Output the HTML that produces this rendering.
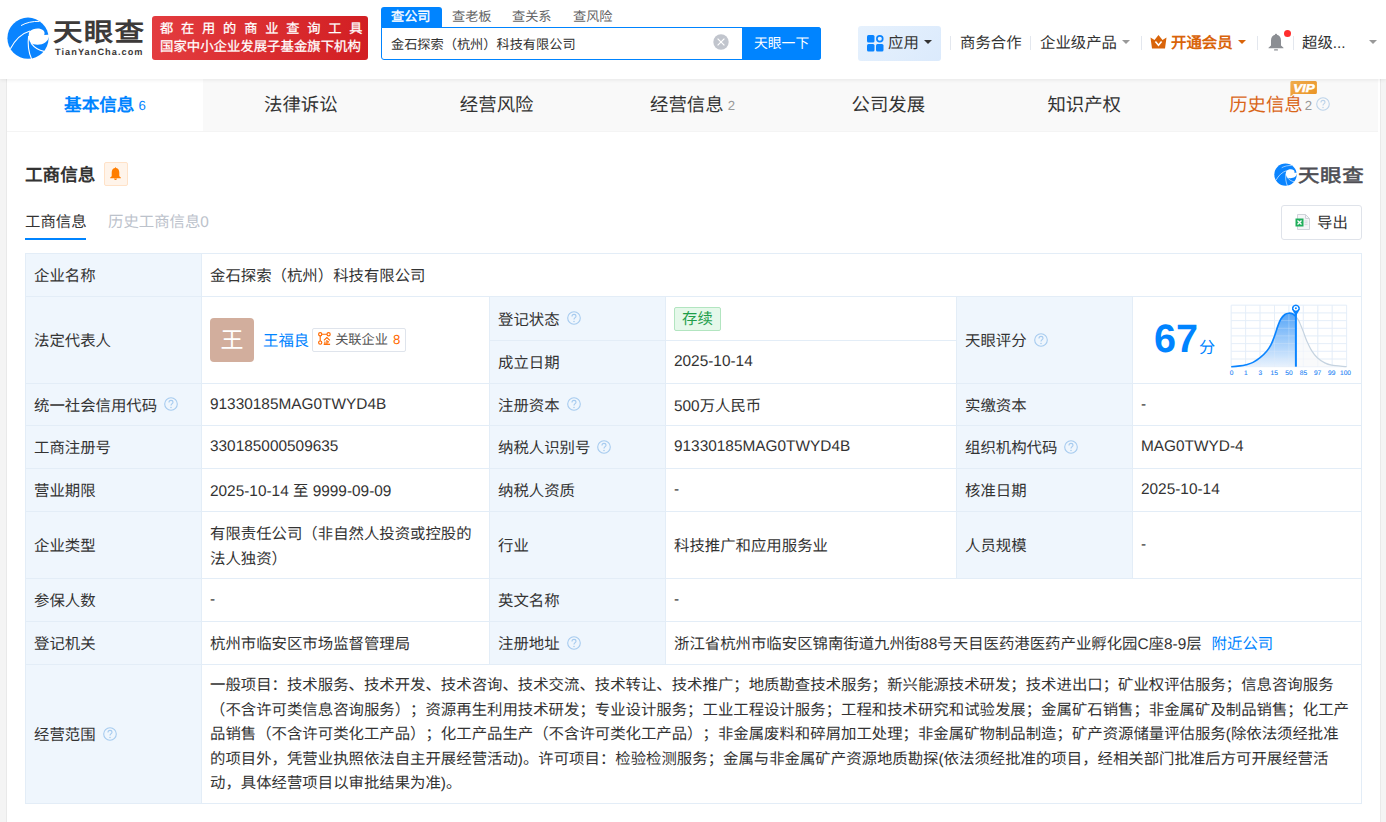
<!DOCTYPE html>
<html lang="zh-CN">
<head>
<meta charset="utf-8">
<style>
*{margin:0;padding:0;box-sizing:border-box}
html,body{width:1386px;height:822px;overflow:hidden;text-rendering:geometricPrecision;text-spacing-trim:space-all;background:#f4f4f4;font-family:"Liberation Sans",sans-serif;color:#333}
.abs{position:absolute}
#hdr{position:absolute;left:0;top:0;width:1386px;height:79px;background:#fff;box-shadow:0 1px 4px rgba(0,0,0,.08);z-index:2}
.nw{white-space:nowrap}
#card{position:absolute;left:6px;top:79px;width:1375px;height:760px;background:#fff;border-left:1px solid #e9e9e9;border-right:1px solid #e9e9e9}
.tabs{position:absolute;left:0;top:0;width:1372px;height:52px;background:#f9f9f9;border-bottom:1px solid #eee}
.tab{position:absolute;top:79px;height:52px;line-height:52px;text-align:center;font-size:18.4px;color:#333;white-space:nowrap}
.tab.on{background:#fff;color:#0084ff;font-weight:bold;font-size:17.6px}
.tab .n{font-size:13.2px;color:#999;font-weight:normal;margin-left:4px;position:relative;top:-1px}
.tab.on .n{color:#0084ff}
table{position:absolute;left:18px;top:174px;border-collapse:collapse;table-layout:fixed;font-size:15.4px;color:#333}
td{border:1px solid #e3edf6;padding:0 8px;vertical-align:middle}
td.l{background:#eff6fd}
.q{display:inline-block;width:14px;height:14px;border:1.2px solid #b7cfe6;border-radius:50%;color:#b7cfe6;font-size:10px;line-height:12px;text-align:center;vertical-align:middle;margin-left:6px;position:relative;top:-1px}
.c{position:absolute;display:flex;align-items:center;padding-left:8px;font-size:15.4px;color:#333;white-space:nowrap}
.av{width:44px;height:44px;border-radius:4px;background:#d2ae9d;color:#fff;font-size:23px;line-height:45px;text-align:center}
.rel{display:inline-block;margin-left:3px;height:24px;line-height:22px;border:1px solid #dfe4ec;border-radius:2px;padding:0 5px 0 5px;font-size:13.2px;position:relative;top:-0.5px}
.tag{display:inline-block;height:24px;line-height:24px;padding:0 7px;background:#e5f8ea;border:1px solid #b2e5c0;border-radius:2px;color:#1f9e4a;font-size:15.4px}
.scope{line-height:24.6px;white-space:nowrap;text-spacing-trim:space-all;position:relative;top:1.5px}
.qi{margin-left:7px;flex:none;position:relative;top:-0.5px}
.tab .qi{vertical-align:middle;position:relative;top:-2px;margin-left:5px}
</style>
</head>
<body>
<div id="hdr">
  <!-- logo -->
  <svg class="abs" style="left:5px;top:15px" width="46" height="46" viewBox="0 0 46 46"><g id="lg">
    <circle cx="23" cy="23.2" r="20.6" fill="#0a84ff"/>
    <path d="M24.4 16.4C28 13.4 34.5 12.4 38.2 15.2C39.9 16.6 39.8 18.6 39.2 19.9L46 19.6L46 21.6L43.9 21.8C43.3 26.5 38.5 29.8 32.5 29.8C29.5 29.8 27.3 29 26.1 28.3C23.6 25.8 23 20.5 24.4 16.4Z" fill="#fff"/>
    <path d="M5.4 33.8C10 25 17 18.3 25 16" fill="none" stroke="#fff" stroke-width="1.1"/>
    <path d="M23.6 21C22.6 29 23.6 37.5 26.6 44" fill="none" stroke="#fff" stroke-width="1.1"/>
    <path d="M26 28.2C29 32.2 33.5 35.4 39 36.4" fill="none" stroke="#fff" stroke-width="1.1"/>
    <path d="M16 10.6C21 7.6 28 6.1 34.5 6.4" fill="none" stroke="#fff" stroke-width="1"/>
  </g></svg>
  <div class="abs nw" style="left:53px;top:19px;font-size:29.5px;line-height:34px;font-weight:bold;color:#3d3a39;letter-spacing:1.2px;transform:scaleY(0.86);transform-origin:0 0">天眼查</div>
  <div class="abs nw" style="left:55px;top:46px;font-size:9.2px;line-height:12px;font-weight:bold;color:#3d3a39;letter-spacing:1.05px">TianYanCha.com</div>
  <!-- banner -->
  <div class="abs" style="left:152px;top:16px;width:216px;height:44px;border-radius:3px;background:linear-gradient(90deg,#e33c3f,#d21f23)"></div>
  <div class="abs nw" style="left:160px;top:20.3px;font-size:13.2px;color:#fff;letter-spacing:7.85px;line-height:18px;-webkit-text-stroke:0.25px #fff">都在用的商业查询工具</div>
  <div class="abs nw" style="left:160px;top:38.3px;font-size:13.4px;color:#fff;line-height:18px;-webkit-text-stroke:0.25px #fff">国家中小企业发展子基金旗下机构</div>
  <!-- search -->
  <div class="abs" style="left:381px;top:7px;width:61px;height:21px;background:#0084ff;border-radius:3px 3px 0 0"></div>
  <div class="abs nw" style="left:391px;top:7px;font-size:13.2px;line-height:20px;color:#fff;-webkit-text-stroke:0.35px #fff">查公司</div>
  <div class="abs nw" style="left:452px;top:7px;font-size:13.2px;line-height:20px;color:#666">查老板</div>
  <div class="abs nw" style="left:512px;top:7px;font-size:13.2px;line-height:20px;color:#666">查关系</div>
  <div class="abs nw" style="left:573px;top:7px;font-size:13.2px;line-height:20px;color:#666">查风险</div>
  <div class="abs" style="left:381px;top:27px;width:440px;height:33px;border:1px solid #0084ff;border-radius:0 3px 3px 3px;background:#fff"></div>
  <div class="abs nw" style="left:391px;top:35px;font-size:13.2px;line-height:20px;color:#333">金石探索（杭州）科技有限公司</div>
  <svg class="abs" style="left:713px;top:34.3px" width="16" height="16" viewBox="0 0 16 16"><circle cx="8" cy="8" r="7.7" fill="#c1c5cd"/><path d="M4.6 4.6L11.4 11.4M11.4 4.6L4.6 11.4" stroke="#fff" stroke-width="1.2"/></svg>
  <div class="abs" style="left:742px;top:27px;width:79px;height:33px;background:#0084ff;border-radius:0 3px 3px 0"></div>
  <div class="abs nw" style="left:754px;top:34px;font-size:13.8px;line-height:20px;color:#fff">天眼一下</div>
  <!-- right nav -->
  <div class="abs" style="left:858px;top:26px;width:83px;height:35px;background:linear-gradient(135deg,#e6f1fd,#dbeafc);border-radius:3px"></div>
  <svg class="abs" style="left:867px;top:35px" width="17" height="17" viewBox="0 0 17 17">
    <rect x="0" y="0" width="7.5" height="7.5" rx="1.5" fill="#0a84ff"/>
    <circle cx="12.8" cy="3.75" r="2.9" fill="none" stroke="#0a84ff" stroke-width="1.7"/>
    <rect x="0" y="9" width="7.5" height="7.5" rx="1.5" fill="#0a84ff"/>
    <rect x="9" y="9" width="7.5" height="7.5" rx="1.5" fill="#0a84ff"/>
  </svg>
  <div class="abs nw" style="left:888px;top:32.7px;font-size:15.4px;line-height:22px;color:#333">应用</div>
  <div class="abs" style="left:924px;top:40px;border-left:4px solid transparent;border-right:4px solid transparent;border-top:4px solid #333"></div>
  <div class="abs" style="left:950px;top:36px;width:1px;height:14px;background:#e3e7ee"></div>
  <div class="abs nw" style="left:960px;top:32.7px;font-size:15.4px;line-height:22px;color:#333">商务合作</div>
  <div class="abs" style="left:1030px;top:36px;width:1px;height:14px;background:#e3e7ee"></div>
  <div class="abs nw" style="left:1040px;top:32.7px;font-size:15.4px;line-height:22px;color:#333">企业级产品</div>
  <div class="abs" style="left:1122px;top:40px;border-left:4px solid transparent;border-right:4px solid transparent;border-top:4px solid #999"></div>
  <div class="abs" style="left:1141px;top:36px;width:1px;height:14px;background:#e3e7ee"></div>
  <svg class="abs" style="left:1150px;top:35px" width="17" height="14" viewBox="0 0 17 14"><path d="M0.5 2.5L4.5 5L8.5 0L12.5 5L16.5 2.5L15 13.5H2Z" fill="#d9640a"/><path d="M5.4 6.5L8.5 10.2L11.6 6.5" fill="none" stroke="#fff" stroke-width="1.6"/></svg>
  <div class="abs nw" style="left:1171px;top:32.7px;font-size:15.4px;line-height:22px;color:#d9640a;font-weight:bold">开通会员</div>
  <div class="abs" style="left:1238px;top:40px;border-left:4px solid transparent;border-right:4px solid transparent;border-top:4px solid #d9640a"></div>
  <div class="abs" style="left:1257px;top:36px;width:1px;height:14px;background:#e3e7ee"></div>
  <svg class="abs" style="left:1268px;top:33px" width="16" height="18" viewBox="0 0 16 18"><path d="M8 0.8C8.6 0.8 9 1.2 9 1.8C11.6 2.4 13 4.6 13 7.5V12.5L15.5 14.8V15.3H0.5V14.8L3 12.5V7.5C3 4.6 4.4 2.4 7 1.8C7 1.2 7.4 0.8 8 0.8Z" fill="#8b8e93"/><rect x="6" y="16.3" width="4" height="1.3" rx="0.6" fill="#8b8e93"/></svg>
  <div class="abs" style="left:1284px;top:30px;width:7.4px;height:7.4px;border-radius:50%;background:#ff2d2d"></div>
  <div class="abs" style="left:1293px;top:36px;width:1px;height:14px;background:#e3e7ee"></div>
  <div class="abs nw" style="left:1302px;top:32.7px;font-size:15.4px;line-height:22px;color:#333">超级...</div>
  <div class="abs" style="left:1369px;top:40px;border-left:4px solid transparent;border-right:4px solid transparent;border-top:4px solid #999"></div>
</div>

<div id="card"></div>
<div id="tabs" class="abs" style="left:7px;top:79px;width:1371px;height:53px;background:#f9f9f9;border-bottom:1px solid #f4f4f4"></div>
<div class="abs" style="left:7px;top:79px;width:196px;height:52px;background:#fff;border-right:1px solid #efefef"></div>
<div class="tab on" style="left:7.00px;width:195.86px">基本信息<span class="n">6</span></div>
<div class="tab" style="left:202.86px;width:195.86px">法律诉讼</div>
<div class="tab" style="left:398.72px;width:195.86px">经营风险</div>
<div class="tab" style="left:594.58px;width:195.86px">经营信息<span class="n">2</span></div>
<div class="tab" style="left:790.44px;width:195.86px">公司发展</div>
<div class="tab" style="left:986.30px;width:195.86px">知识产权</div>
<div class="tab" style="left:1182.16px;width:195.86px;color:#d9661a">历史信息<span class="n" style="margin-left:2px">2</span><svg class="qi" style="margin-left:5px;left:-1px" width="14" height="14" viewBox="0.5 0.5 14 14"><circle cx="7.5" cy="7.5" r="6.3" fill="none" stroke="#bcd3ea" stroke-width="1.1"/><path d="M5.5 5.9C5.5 4.6 6.4 3.9 7.5 3.9C8.6 3.9 9.5 4.7 9.5 5.8C9.5 7.1 7.5 7.2 7.5 8.9" fill="none" stroke="#bcd3ea" stroke-width="1.1"/><circle cx="7.5" cy="10.9" r="0.75" fill="#bcd3ea"/></svg></div>

<svg class="abs" style="left:1289px;top:80px;z-index:1" width="30" height="18" viewBox="0 0 30 18"><defs><linearGradient id="vg" x1="0" y1="0" x2="1" y2="1"><stop offset="0" stop-color="#f2ad4e"/><stop offset="1" stop-color="#e99222"/></linearGradient></defs><path d="M2.6 1.1H26.4Q27.9 1.1 27.9 2.6V12.4Q27.9 13.9 26.4 13.9H4.4L1.4 16.6V2.6Q1.4 1.1 2.6 1.1Z" fill="url(#vg)"/><text x="4.2" y="12.1" font-family="Liberation Sans" font-weight="bold" font-style="italic" font-size="11.4" fill="#fff" stroke="#fff" stroke-width="0.5" textLength="21.5" lengthAdjust="spacingAndGlyphs">VIP</text></svg>
<!-- section title -->
<div class="abs nw" style="left:25px;top:162px;font-size:17.6px;line-height:26px;font-weight:bold;color:#333">工商信息</div>
<div class="abs" style="left:104px;top:162px;width:24px;height:24px;background:#fff4ea;border:1px solid #ffe2c8;border-radius:2px"></div>
<svg class="abs" style="left:110px;top:167px" width="11" height="13" viewBox="0 0 11 13"><path d="M5.5 0.3C5.9 0.3 6.1 0.6 6.1 1C8.3 1.4 9.3 3.2 9.3 5.6V9.3L10.8 10.6V11.2H0.2V10.6L1.7 9.3V5.6C1.7 3.2 2.7 1.4 4.9 1C4.9 0.6 5.1 0.3 5.5 0.3Z" fill="#ff7d00"/><path d="M4 11.4H7C7 12.3 6.3 12.9 5.5 12.9C4.7 12.9 4 12.3 4 11.4Z" fill="#ff7d00"/></svg>
<!-- mini logo -->
<svg class="abs" style="left:1273px;top:162px" width="25" height="25" viewBox="0 0 46 46"><use href="#lg"/></svg>
<div class="abs nw" style="left:1298px;top:165.5px;font-size:21.5px;line-height:24px;font-weight:normal;-webkit-text-stroke:0.7px #4e4e54;color:#4e4e54;letter-spacing:0.6px;transform:scaleY(0.86);transform-origin:0 0">天眼查</div>
<!-- subtabs -->
<div class="abs nw" style="left:25px;top:211.5px;font-size:15.4px;line-height:22px;color:#333">工商信息</div>
<div class="abs" style="left:25px;top:238px;width:61px;height:2px;background:#0084ff"></div>
<div class="abs nw" style="left:108px;top:211.5px;font-size:15.4px;line-height:22px;color:#bcc2cb">历史工商信息0</div>
<!-- export -->
<div class="abs" style="left:1281px;top:205px;width:81px;height:35px;border:1px solid #dfe3ea;border-radius:3px;background:#fff"></div>
<svg class="abs" style="left:1295px;top:214px" width="16" height="16" viewBox="0 0 16 16"><path d="M2.5 0.5H10.5L14.5 4.5V15.5H2.5Z" fill="#f4f5f7" stroke="#cfd3da"/><path d="M10.5 0.5V4.5H14.5" fill="none" stroke="#cfd3da"/><rect x="0.5" y="4.5" width="8" height="8" fill="#1fae5b"/><path d="M2.5 6.5L6.5 10.5M6.5 6.5L2.5 10.5" stroke="#fff" stroke-width="1.3"/><path d="M9.5 7H12.5M9.5 8.8H12.5M9.5 10.6H12.5" stroke="#cfd3da" stroke-width="0.9"/></svg>
<div class="abs nw" style="left:1317px;top:213px;font-size:15.4px;line-height:22px;color:#333">导出</div>
<div class="abs" style="left:25px;top:253px;width:1337px;height:551px;background:#fff"></div>
<div class="abs" style="left:25px;top:253px;width:176px;height:550px;background:#eff6fd"></div>
<div class="abs" style="left:489px;top:296px;width:176px;height:368px;background:#eff6fd"></div>
<div class="abs" style="left:956px;top:296px;width:176px;height:282px;background:#eff6fd"></div>
<div class="abs" style="left:25px;top:253px;width:1px;height:551px;background:#e3edf7"></div>
<div class="abs" style="left:201px;top:253px;width:1px;height:551px;background:#e3edf7"></div>
<div class="abs" style="left:489px;top:296px;width:1px;height:368px;background:#e3edf7"></div>
<div class="abs" style="left:665px;top:296px;width:1px;height:368px;background:#e3edf7"></div>
<div class="abs" style="left:956px;top:296px;width:1px;height:282px;background:#e3edf7"></div>
<div class="abs" style="left:1132px;top:296px;width:1px;height:282px;background:#e3edf7"></div>
<div class="abs" style="left:1361px;top:253px;width:1px;height:551px;background:#e3edf7"></div>
<div class="abs" style="left:25px;top:253px;width:1337px;height:1px;background:#e3edf7"></div>
<div class="abs" style="left:25px;top:296px;width:1337px;height:1px;background:#e3edf7"></div>
<div class="abs" style="left:489px;top:340px;width:467px;height:1px;background:#e3edf7"></div>
<div class="abs" style="left:25px;top:383px;width:1337px;height:1px;background:#e3edf7"></div>
<div class="abs" style="left:25px;top:425px;width:1337px;height:1px;background:#e3edf7"></div>
<div class="abs" style="left:25px;top:468px;width:1337px;height:1px;background:#e3edf7"></div>
<div class="abs" style="left:25px;top:511px;width:1337px;height:1px;background:#e3edf7"></div>
<div class="abs" style="left:25px;top:578px;width:1337px;height:1px;background:#e3edf7"></div>
<div class="abs" style="left:25px;top:621px;width:1337px;height:1px;background:#e3edf7"></div>
<div class="abs" style="left:25px;top:664px;width:1337px;height:1px;background:#e3edf7"></div>
<div class="abs" style="left:25px;top:803px;width:1337px;height:1px;background:#e3edf7"></div>
<div class="c" style="left:26px;top:254px;width:175px;height:42px;">企业名称</div>
<div class="c" style="left:202px;top:254px;width:1159px;height:42px;">金石探索（杭州）科技有限公司</div>
<div class="c" style="left:26px;top:297px;width:175px;height:86px;">法定代表人</div>
<div class="c" style="left:202px;top:297px;width:287px;height:86px;"><div class="av">王</div><span style="color:#0084ff;margin-left:9px">王福良</span><span class="rel"><svg width="13" height="13" viewBox="0 0 13 13" style="vertical-align:-1.5px"><g fill="none" stroke="#ff6a00" stroke-width="1.15"><circle cx="2.2" cy="2.2" r="1.6"/><circle cx="10.6" cy="2.2" r="1.6"/><circle cx="2.2" cy="10.6" r="1.6"/><path d="M3.8 2.2H9M2.2 3.8V9"/><path d="M5.9 8.4L8.9 5.5L11.9 8.4M8.9 8V12.2M8.9 9.8H11M6.9 9.6V12.2"/><path d="M5.7 12.3H12.1" stroke-width="1.3"/></g></svg><span style="margin-left:4px;color:#555">关联企业</span><span style="margin-left:5px;color:#ff6a00">8</span></span></div>
<div class="c" style="left:490px;top:297px;width:175px;height:43px;">登记状态<svg class="qi" width="14" height="14" viewBox="0.5 0.5 14 14"><circle cx="7.5" cy="7.5" r="6.3" fill="none" stroke="#a6cbef" stroke-width="1.1"/><path d="M5.5 5.9C5.5 4.6 6.4 3.9 7.5 3.9C8.6 3.9 9.5 4.7 9.5 5.8C9.5 7.1 7.5 7.2 7.5 8.9" fill="none" stroke="#a6cbef" stroke-width="1.1"/><circle cx="7.5" cy="10.9" r="0.75" fill="#a6cbef"/></svg></div>
<div class="c" style="left:666px;top:297px;width:290px;height:43px;"><span class="tag">存续</span></div>
<div class="c" style="left:490px;top:341px;width:175px;height:42px;">成立日期</div>
<div class="c" style="left:666px;top:341px;width:290px;height:42px;">2025-10-14</div>
<div class="c" style="left:957px;top:297px;width:175px;height:86px;">天眼评分<svg class="qi" width="14" height="14" viewBox="0.5 0.5 14 14"><circle cx="7.5" cy="7.5" r="6.3" fill="none" stroke="#a6cbef" stroke-width="1.1"/><path d="M5.5 5.9C5.5 4.6 6.4 3.9 7.5 3.9C8.6 3.9 9.5 4.7 9.5 5.8C9.5 7.1 7.5 7.2 7.5 8.9" fill="none" stroke="#a6cbef" stroke-width="1.1"/><circle cx="7.5" cy="10.9" r="0.75" fill="#a6cbef"/></svg></div>
<div class="c" style="left:1133px;top:297px;width:228px;height:86px;"></div>
<svg class="abs" style="left:1228px;top:300px" width="124" height="80" viewBox="1228 300 124 80">
<defs><linearGradient id="gf" x1="0" y1="0" x2="0" y2="1"><stop offset="0" stop-color="#55a5f8"/><stop offset="1" stop-color="#e8f2fd"/></linearGradient></defs>
<path d="M1231.2 305.2V366.7" stroke="#e9f1fa" stroke-width="1"/><path d="M1245.6 305.2V366.7" stroke="#e9f1fa" stroke-width="1"/><path d="M1260.0 305.2V366.7" stroke="#e9f1fa" stroke-width="1"/><path d="M1274.5 305.2V366.7" stroke="#e9f1fa" stroke-width="1"/><path d="M1288.9 305.2V366.7" stroke="#e9f1fa" stroke-width="1"/><path d="M1303.3 305.2V366.7" stroke="#e9f1fa" stroke-width="1"/><path d="M1317.8 305.2V366.7" stroke="#e9f1fa" stroke-width="1"/><path d="M1332.2 305.2V366.7" stroke="#e9f1fa" stroke-width="1"/><path d="M1346.6 305.2V366.7" stroke="#e9f1fa" stroke-width="1"/><path d="M1231.2 305.2H1346.6" stroke="#e9f1fa" stroke-width="1"/><path d="M1231.2 312.9H1346.6" stroke="#e9f1fa" stroke-width="1"/><path d="M1231.2 320.6H1346.6" stroke="#e9f1fa" stroke-width="1"/><path d="M1231.2 328.3H1346.6" stroke="#e9f1fa" stroke-width="1"/><path d="M1231.2 335.9H1346.6" stroke="#e9f1fa" stroke-width="1"/><path d="M1231.2 343.6H1346.6" stroke="#e9f1fa" stroke-width="1"/><path d="M1231.2 351.3H1346.6" stroke="#e9f1fa" stroke-width="1"/><path d="M1231.2 359.0H1346.6" stroke="#e9f1fa" stroke-width="1"/><path d="M1231.2 366.7H1346.6" stroke="#e9f1fa" stroke-width="1"/>
<path d="M1295.9 316.5 C1296.4 317.2 1297.7 318.6 1298.9 321.0 C1300.1 323.4 1301.7 327.6 1303.0 330.9 C1304.3 334.2 1305.3 337.6 1306.8 340.9 C1308.3 344.2 1310.0 348.1 1311.8 350.9 C1313.5 353.7 1315.1 355.7 1317.3 357.7 C1319.5 359.7 1322.4 361.7 1324.8 362.9 C1327.2 364.1 1328.0 364.5 1331.6 365.1 C1335.2 365.7 1344.1 366.4 1346.6 366.7 L1295.9 366.7Z" fill="#f9fafb"/>
<path d="M1231.2 366.7 C1232.7 366.6 1237.5 366.2 1240.0 365.9 C1242.5 365.6 1244.0 365.3 1246.2 364.7 C1248.4 364.1 1250.7 363.6 1253.0 362.4 C1255.3 361.2 1257.8 359.6 1260.1 357.7 C1262.4 355.8 1265.1 353.0 1266.9 350.9 C1268.7 348.8 1269.7 347.3 1270.9 344.9 C1272.2 342.5 1273.2 339.6 1274.4 336.4 C1275.6 333.2 1276.8 328.8 1277.9 325.9 C1279.0 323.0 1279.7 320.9 1280.9 319.0 C1282.1 317.1 1283.6 315.5 1284.9 314.5 C1286.2 313.5 1287.4 313.3 1288.7 313.2 C1290.0 313.1 1291.7 313.4 1292.9 314.0 C1294.1 314.6 1295.4 316.1 1295.9 316.5 L1295.9 366.7 L1231.2 366.7Z" fill="url(#gf)"/>
<path d="M1231.2 305.2V366.7" stroke="rgba(225,236,248,0.3)" stroke-width="1"/><path d="M1245.6 305.2V366.7" stroke="rgba(225,236,248,0.3)" stroke-width="1"/><path d="M1260.0 305.2V366.7" stroke="rgba(225,236,248,0.3)" stroke-width="1"/><path d="M1274.5 305.2V366.7" stroke="rgba(225,236,248,0.3)" stroke-width="1"/><path d="M1288.9 305.2V366.7" stroke="rgba(225,236,248,0.3)" stroke-width="1"/><path d="M1303.3 305.2V366.7" stroke="rgba(225,236,248,0.3)" stroke-width="1"/><path d="M1317.8 305.2V366.7" stroke="rgba(225,236,248,0.3)" stroke-width="1"/><path d="M1332.2 305.2V366.7" stroke="rgba(225,236,248,0.3)" stroke-width="1"/><path d="M1346.6 305.2V366.7" stroke="rgba(225,236,248,0.3)" stroke-width="1"/><path d="M1231.2 305.2H1346.6" stroke="rgba(225,236,248,0.3)" stroke-width="1"/><path d="M1231.2 312.9H1346.6" stroke="rgba(225,236,248,0.3)" stroke-width="1"/><path d="M1231.2 320.6H1346.6" stroke="rgba(225,236,248,0.3)" stroke-width="1"/><path d="M1231.2 328.3H1346.6" stroke="rgba(225,236,248,0.3)" stroke-width="1"/><path d="M1231.2 335.9H1346.6" stroke="rgba(225,236,248,0.3)" stroke-width="1"/><path d="M1231.2 343.6H1346.6" stroke="rgba(225,236,248,0.3)" stroke-width="1"/><path d="M1231.2 351.3H1346.6" stroke="rgba(225,236,248,0.3)" stroke-width="1"/><path d="M1231.2 359.0H1346.6" stroke="rgba(225,236,248,0.3)" stroke-width="1"/><path d="M1231.2 366.7H1346.6" stroke="rgba(225,236,248,0.3)" stroke-width="1"/>
<path d="M1295.9 316.5 C1296.4 317.2 1297.7 318.6 1298.9 321.0 C1300.1 323.4 1301.7 327.6 1303.0 330.9 C1304.3 334.2 1305.3 337.6 1306.8 340.9 C1308.3 344.2 1310.0 348.1 1311.8 350.9 C1313.5 353.7 1315.1 355.7 1317.3 357.7 C1319.5 359.7 1322.4 361.7 1324.8 362.9 C1327.2 364.1 1328.0 364.5 1331.6 365.1 C1335.2 365.7 1344.1 366.4 1346.6 366.7" fill="none" stroke="#c5d3e0" stroke-width="1.2"/>
<path d="M1231.2 366.7 C1232.7 366.6 1237.5 366.2 1240.0 365.9 C1242.5 365.6 1244.0 365.3 1246.2 364.7 C1248.4 364.1 1250.7 363.6 1253.0 362.4 C1255.3 361.2 1257.8 359.6 1260.1 357.7 C1262.4 355.8 1265.1 353.0 1266.9 350.9 C1268.7 348.8 1269.7 347.3 1270.9 344.9 C1272.2 342.5 1273.2 339.6 1274.4 336.4 C1275.6 333.2 1276.8 328.8 1277.9 325.9 C1279.0 323.0 1279.7 320.9 1280.9 319.0 C1282.1 317.1 1283.6 315.5 1284.9 314.5 C1286.2 313.5 1287.4 313.3 1288.7 313.2 C1290.0 313.1 1291.7 313.4 1292.9 314.0 C1294.1 314.6 1295.4 316.1 1295.9 316.5" fill="none" stroke="#0a84ff" stroke-width="1.6"/>
<path d="M1295.9 314V366.7" stroke="#0a84ff" stroke-width="2"/>
<path d="M1292 309.5A4 4 0 1 1 1299.8 309.5L1295.9 316Z" fill="#0a84ff"/>
<circle cx="1295.9" cy="308.3" r="2.4" fill="#fff"/><circle cx="1295.9" cy="308.3" r="1" fill="#0a84ff"/>
<g font-family="Liberation Sans" font-size="6.6" fill="#1f86f5" stroke="#1f86f5" stroke-width="0.12"><text x="1231.5" y="375" text-anchor="middle">0</text><text x="1245.8" y="375" text-anchor="middle">1</text><text x="1260.4" y="375" text-anchor="middle">3</text><text x="1274.2" y="375" text-anchor="middle">15</text><text x="1289" y="375" text-anchor="middle">50</text><text x="1303.5" y="375" text-anchor="middle">85</text><text x="1317.6" y="375" text-anchor="middle">97</text><text x="1331.7" y="375" text-anchor="middle">99</text><text x="1345.5" y="375" text-anchor="middle">100</text></g>
</svg>
<div class="abs nw" style="left:1154px;top:319px;font-size:39.6px;line-height:40px;font-weight:bold;color:#0084ff">67</div>
<div class="abs nw" style="left:1199px;top:337px;font-size:16.2px;line-height:22px;color:#0084ff">分</div>

<div class="c" style="left:26px;top:384px;width:175px;height:41px;">统一社会信用代码<svg class="qi" width="14" height="14" viewBox="0.5 0.5 14 14"><circle cx="7.5" cy="7.5" r="6.3" fill="none" stroke="#a6cbef" stroke-width="1.1"/><path d="M5.5 5.9C5.5 4.6 6.4 3.9 7.5 3.9C8.6 3.9 9.5 4.7 9.5 5.8C9.5 7.1 7.5 7.2 7.5 8.9" fill="none" stroke="#a6cbef" stroke-width="1.1"/><circle cx="7.5" cy="10.9" r="0.75" fill="#a6cbef"/></svg></div>
<div class="c" style="left:202px;top:384px;width:287px;height:41px;">91330185MAG0TWYD4B</div>
<div class="c" style="left:490px;top:384px;width:175px;height:41px;">注册资本<svg class="qi" width="14" height="14" viewBox="0.5 0.5 14 14"><circle cx="7.5" cy="7.5" r="6.3" fill="none" stroke="#a6cbef" stroke-width="1.1"/><path d="M5.5 5.9C5.5 4.6 6.4 3.9 7.5 3.9C8.6 3.9 9.5 4.7 9.5 5.8C9.5 7.1 7.5 7.2 7.5 8.9" fill="none" stroke="#a6cbef" stroke-width="1.1"/><circle cx="7.5" cy="10.9" r="0.75" fill="#a6cbef"/></svg></div>
<div class="c" style="left:666px;top:384px;width:290px;height:41px;">500万人民币</div>
<div class="c" style="left:957px;top:384px;width:175px;height:41px;">实缴资本</div>
<div class="c" style="left:1133px;top:384px;width:228px;height:41px;">-</div>
<div class="c" style="left:26px;top:426px;width:175px;height:42px;">工商注册号</div>
<div class="c" style="left:202px;top:426px;width:287px;height:42px;">330185000509635</div>
<div class="c" style="left:490px;top:426px;width:175px;height:42px;">纳税人识别号<svg class="qi" width="14" height="14" viewBox="0.5 0.5 14 14"><circle cx="7.5" cy="7.5" r="6.3" fill="none" stroke="#a6cbef" stroke-width="1.1"/><path d="M5.5 5.9C5.5 4.6 6.4 3.9 7.5 3.9C8.6 3.9 9.5 4.7 9.5 5.8C9.5 7.1 7.5 7.2 7.5 8.9" fill="none" stroke="#a6cbef" stroke-width="1.1"/><circle cx="7.5" cy="10.9" r="0.75" fill="#a6cbef"/></svg></div>
<div class="c" style="left:666px;top:426px;width:290px;height:42px;">91330185MAG0TWYD4B</div>
<div class="c" style="left:957px;top:426px;width:175px;height:42px;">组织机构代码<svg class="qi" width="14" height="14" viewBox="0.5 0.5 14 14"><circle cx="7.5" cy="7.5" r="6.3" fill="none" stroke="#a6cbef" stroke-width="1.1"/><path d="M5.5 5.9C5.5 4.6 6.4 3.9 7.5 3.9C8.6 3.9 9.5 4.7 9.5 5.8C9.5 7.1 7.5 7.2 7.5 8.9" fill="none" stroke="#a6cbef" stroke-width="1.1"/><circle cx="7.5" cy="10.9" r="0.75" fill="#a6cbef"/></svg></div>
<div class="c" style="left:1133px;top:426px;width:228px;height:42px;">MAG0TWYD-4</div>
<div class="c" style="left:26px;top:469px;width:175px;height:42px;">营业期限</div>
<div class="c" style="left:202px;top:469px;width:287px;height:42px;">2025-10-14 至 9999-09-09</div>
<div class="c" style="left:490px;top:469px;width:175px;height:42px;">纳税人资质</div>
<div class="c" style="left:666px;top:469px;width:290px;height:42px;">-</div>
<div class="c" style="left:957px;top:469px;width:175px;height:42px;">核准日期</div>
<div class="c" style="left:1133px;top:469px;width:228px;height:42px;">2025-10-14</div>
<div class="c" style="left:26px;top:512px;width:175px;height:66px;">企业类型</div>
<div class="c" style="left:202px;top:512px;width:287px;height:66px;"><div style="line-height:25px;position:relative;top:1.5px">有限责任公司（非自然人投资或控股的<br>法人独资）</div></div>
<div class="c" style="left:490px;top:512px;width:175px;height:66px;">行业</div>
<div class="c" style="left:666px;top:512px;width:290px;height:66px;">科技推广和应用服务业</div>
<div class="c" style="left:957px;top:512px;width:175px;height:66px;">人员规模</div>
<div class="c" style="left:1133px;top:512px;width:228px;height:66px;">-</div>
<div class="c" style="left:26px;top:579px;width:175px;height:42px;">参保人数</div>
<div class="c" style="left:202px;top:579px;width:287px;height:42px;">-</div>
<div class="c" style="left:490px;top:579px;width:175px;height:42px;">英文名称</div>
<div class="c" style="left:666px;top:579px;width:695px;height:42px;">-</div>
<div class="c" style="left:26px;top:622px;width:175px;height:42px;">登记机关</div>
<div class="c" style="left:202px;top:622px;width:287px;height:42px;">杭州市临安区市场监督管理局</div>
<div class="c" style="left:490px;top:622px;width:175px;height:42px;">注册地址<svg class="qi" width="14" height="14" viewBox="0.5 0.5 14 14"><circle cx="7.5" cy="7.5" r="6.3" fill="none" stroke="#a6cbef" stroke-width="1.1"/><path d="M5.5 5.9C5.5 4.6 6.4 3.9 7.5 3.9C8.6 3.9 9.5 4.7 9.5 5.8C9.5 7.1 7.5 7.2 7.5 8.9" fill="none" stroke="#a6cbef" stroke-width="1.1"/><circle cx="7.5" cy="10.9" r="0.75" fill="#a6cbef"/></svg></div>
<div class="c" style="left:666px;top:622px;width:695px;height:42px;">浙江省杭州市临安区锦南街道九州街88号天目医药港医药产业孵化园C座8-9层<span style="color:#0084ff;margin-left:10px">附近公司</span></div>
<div class="c" style="left:26px;top:665px;width:175px;height:138px;">经营范围<svg class="qi" width="14" height="14" viewBox="0.5 0.5 14 14"><circle cx="7.5" cy="7.5" r="6.3" fill="none" stroke="#a6cbef" stroke-width="1.1"/><path d="M5.5 5.9C5.5 4.6 6.4 3.9 7.5 3.9C8.6 3.9 9.5 4.7 9.5 5.8C9.5 7.1 7.5 7.2 7.5 8.9" fill="none" stroke="#a6cbef" stroke-width="1.1"/><circle cx="7.5" cy="10.9" r="0.75" fill="#a6cbef"/></svg></div>
<div class="c" style="left:202px;top:665px;width:1159px;height:138px;"><div class="scope">一般项目：技术服务、技术开发、技术咨询、技术交流、技术转让、技术推广；地质勘查技术服务；新兴能源技术研发；技术进出口；矿业权评估服务；信息咨询服务<br>（不含许可类信息咨询服务）；资源再生利用技术研发；专业设计服务；工业工程设计服务；工程和技术研究和试验发展；金属矿石销售；非金属矿及制品销售；化工产<br>品销售（不含许可类化工产品）；化工产品生产（不含许可类化工产品）；非金属废料和碎屑加工处理；非金属矿物制品制造；矿产资源储量评估服务(除依法须经批准<br>的项目外，凭营业执照依法自主开展经营活动)。许可项目：检验检测服务；金属与非金属矿产资源地质勘探(依法须经批准的项目，经相关部门批准后方可开展经营活<br>动，具体经营项目以审批结果为准)。</div></div>

</body>
</html>
